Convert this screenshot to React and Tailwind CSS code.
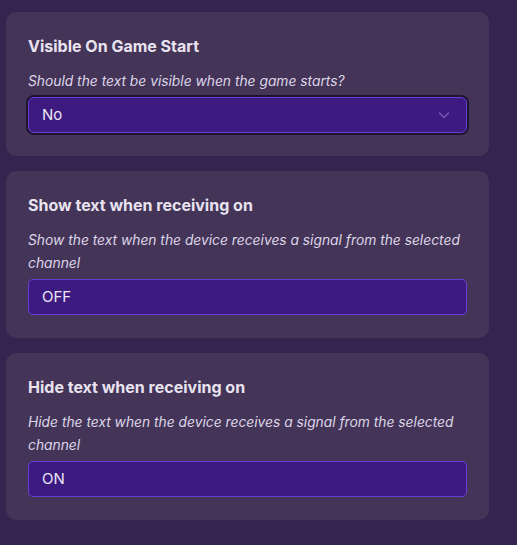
import React from 'react';

const SettingCard = ({ title, description, children }) => (
  <div className="bg-[#433458] rounded-[10px] px-[22px] pt-[22px] pb-[23px]">
    <h3 className="text-[16px] leading-6 font-bold text-[#e8e3ef]">{title}</h3>
    <p className="mt-3 text-[13.8px] leading-[23px] italic text-[#ddd6e6]">{description}</p>
    <div className="mt-1">{children}</div>
  </div>
);

const Field = ({ value }) => (
  <div className="h-9 flex items-center px-[13px] bg-[#3d1a80] border border-[#6a3fd6] rounded-[5px] text-[15px] text-[#ece6f5]">
    {value}
  </div>
);

export default function App() {
  return (
    <div
      className="min-h-screen bg-[#34244f] pt-3 pl-[6px] pr-[28px] pb-7"
      style={{ fontFamily: 'Inter, "Noto Sans", sans-serif' }}
    >
      <div className="w-[483px] flex flex-col gap-[15px]">
        <SettingCard
          title="Visible On Game Start"
          description="Should the text be visible when the game starts?"
        >
          <div className="h-9 flex items-center justify-between pl-[13px] pr-[16px] bg-[#3d1a80] border border-[#6a3fd6] ring-2 ring-[#1d1530] rounded-[6px] text-[15px] text-[#ece6f5]">
            <span>No</span>
            <svg width="12" height="8" viewBox="0 0 12 8" fill="none">
              <path d="M1 1.5 L6 6.5 L11 1.5" stroke="#7a58b0" strokeWidth="1.3" />
            </svg>
          </div>
        </SettingCard>

        <SettingCard
          title="Show text when receiving on"
          description="Show the text when the device receives a signal from the selected channel"
        >
          <Field value="OFF" />
        </SettingCard>

        <SettingCard
          title="Hide text when receiving on"
          description="Hide the text when the device receives a signal from the selected channel"
        >
          <Field value="ON" />
        </SettingCard>
      </div>
    </div>
  );
}
